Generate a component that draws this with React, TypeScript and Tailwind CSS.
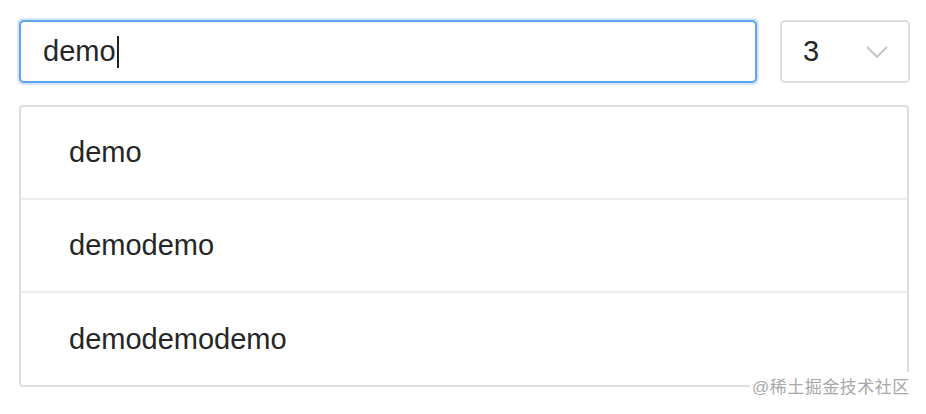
import React from "react";

export default function App() {
  const items = ["demo", "demodemo", "demodemodemo"];
  return (
    <div
      className="relative w-[926px] h-[414px] bg-white overflow-hidden"
      style={{ fontFamily: '"Liberation Sans", Arial, "Noto Sans CJK SC", sans-serif' }}
    >
      <div className="flex gap-[21px] pl-[17px] pt-[18px] pr-[16px]">
        <div className="flex-1 rounded-[6px] p-[2px] bg-[#d3e6fb]">
          <div className="h-[63px] rounded-[5px] border-2 border-[#5ea2ec] bg-white flex items-center pl-[22px]">
            <span className="text-[29px] text-[#262626] leading-none">demo</span>
            <span className="w-[2px] h-[32px] bg-[#222] ml-[1px]" />
          </div>
        </div>
        <div className="w-[130px] mt-[2px] h-[63px] rounded-[5px] border-2 border-[#dcdcdc] bg-white flex items-center pl-[21px] pr-[20px] justify-between">
          <span className="text-[29px] text-[#262626] leading-none">3</span>
          <svg width="22" height="14" viewBox="0 0 22 14" fill="none">
            <path d="M1 2 L11 12 L21 2" stroke="#c4c4c4" strokeWidth="1.8" />
          </svg>
        </div>
      </div>
      <div className="mx-[19px] mt-[20px] w-[890px] rounded-[4px] border-2 border-[#dcdcdc] bg-white flex flex-col">
        <div className="h-[93px] flex items-center pl-[48px] border-b-2 border-[#ececec]">
          <span className="text-[29px] text-[#262626] leading-none">{items[0]}</span>
        </div>
        <div className="h-[93px] flex items-center pl-[48px] border-b-2 border-[#ececec]">
          <span className="text-[29px] text-[#262626] leading-none">{items[1]}</span>
        </div>
        <div className="h-[92px] flex items-center pl-[48px]">
          <span className="text-[29px] text-[#262626] leading-none">{items[2]}</span>
        </div>
      </div>
      <div className="absolute left-[750px] top-[372px] w-[176px] h-[30px] bg-white flex items-center pl-[2px]">
        <span className="text-[17px] text-[#a8a8a8] leading-none tracking-[0.5px]">@稀土掘金技术社区</span>
      </div>
    </div>
  );
}
